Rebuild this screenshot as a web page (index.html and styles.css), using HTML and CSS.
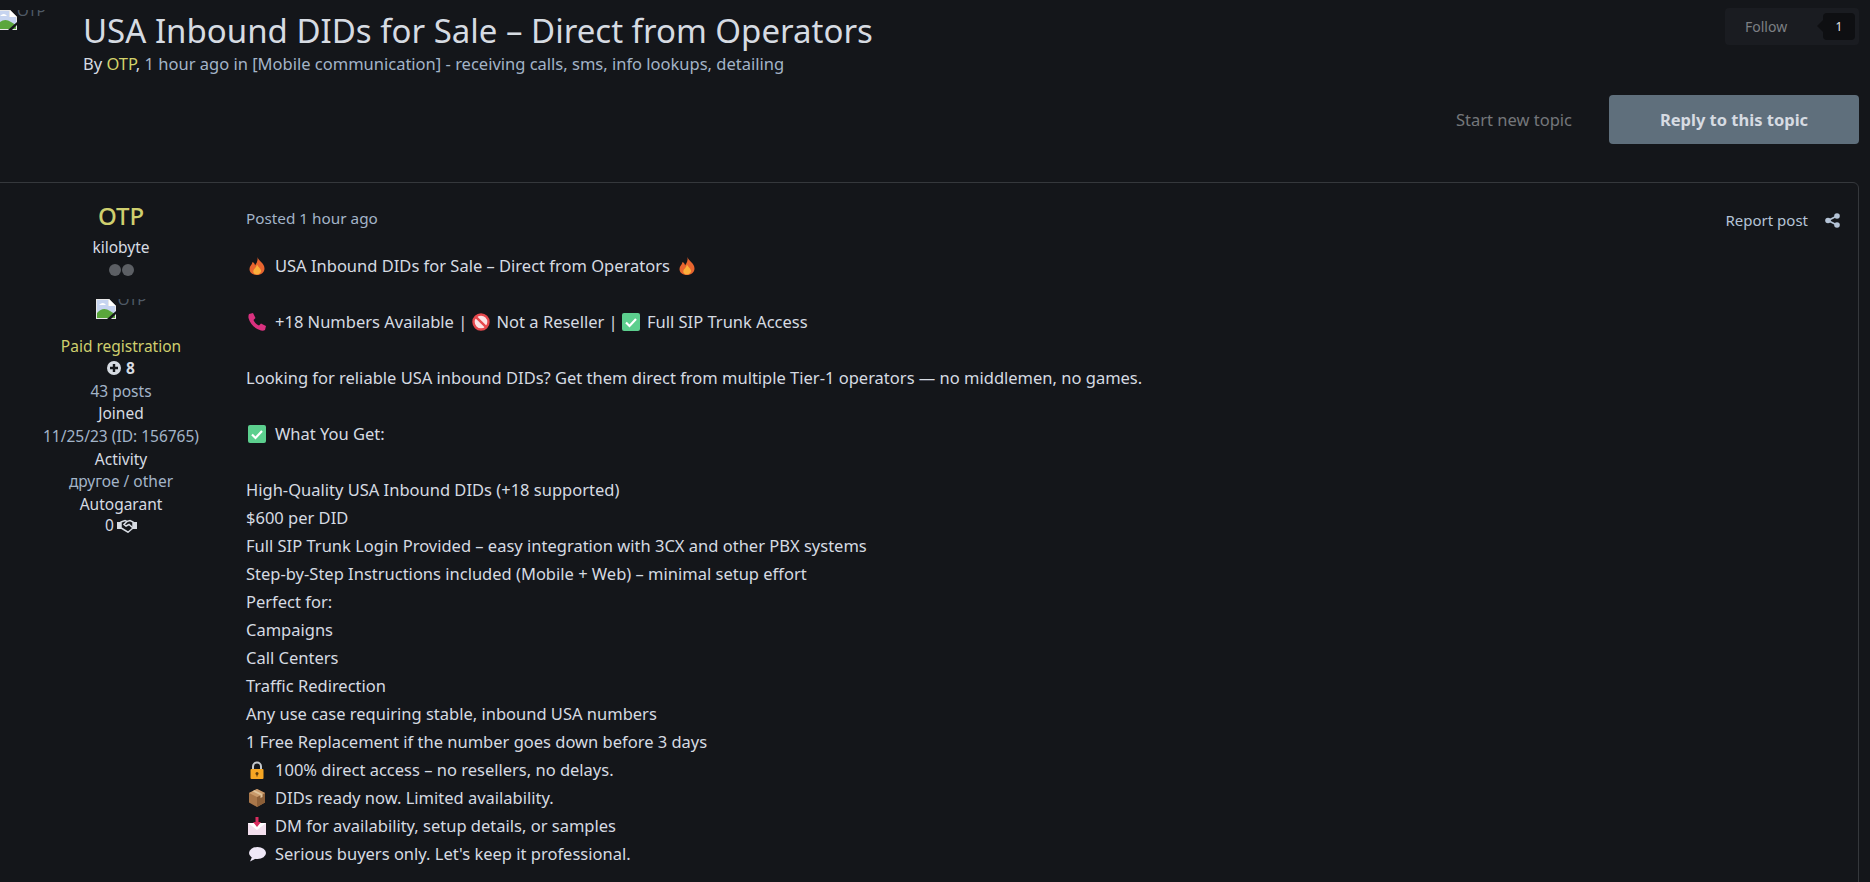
FILE: index.html
```html
<!DOCTYPE html>
<html>
<head>
    <meta charset="UTF-8">
    <title>USA Inbound DIDs for Sale – Direct from Operators</title>
    <link rel="stylesheet" href="styles.css">
</head>
<body>
    <svg class="defs" width="0" height="0">
        <defs>
            <symbol id="broken" viewBox="0 0 20 20">
                <path d="M0 0H13L20 7V20H0Z" fill="#e8e8e8"/>
                <path d="M13 0V7H20Z" fill="#fff"/>
                <path d="M1 1H12V7H19V19H1Z" fill="#c6d4f0"/>
                <path d="M1 19V14Q7 7 14 12L19 15V19Z" fill="#5aa63c"/>
                <path d="M3 6Q7 2 10 6Z" fill="#fff"/>
                <path d="M11 20L20 12V15L15 20Z" fill="#14161a"/>
            </symbol>
            <symbol id="check" viewBox="0 0 18 18">
                <rect x="0" y="0" width="18" height="18" rx="2" fill="#5ccf8e"/>
                <path d="M4 9.500L7.500 13L14 6" fill="none" stroke="#fff" stroke-width="2.200"/>
            </symbol>
            <symbol id="fire" viewBox="0 0 18 18">
                <path d="M9.500 0C10.500 4 16.500 6 16.500 11.500C16.500 15.500 13 18 9 18C4.500 18 1.500 15.500 1.500 12C1.500 9 4 8 4.500 5C6.500 6 7 7.500 7 8.500C9 6 10 3 9.500 0Z" fill="#e8652f"/>
                <path d="M9 7.500C10 10 13.500 12 13 14.500C12.500 16.500 10.500 17.500 9 17.500C6.500 17.500 5 16 5.300 14C5.600 12 8.500 10.500 9 7.500Z" fill="#fbb03b"/>
            </symbol>
        </defs>
    </svg>

    <div class="page">
        <header class="topic-head">
            <div class="topic-head__photo">
                <svg class="broken"><use href="#broken"/></svg>
                <span class="alt-text">OTP</span>
            </div>
            <div class="topic-head__main">
                <h1 class="topic-title">USA Inbound DIDs for Sale – Direct from Operators</h1>
                <p class="topic-by">By <a class="name-link">OTP</a>, <span class="muted">1 hour ago in [Mobile communication] - receiving calls, sms, info lookups, detailing</span></p>
            </div>
            <div class="follow">
                <span class="follow__label">Follow</span>
                <span class="follow__count">1</span>
            </div>
        </header>

        <div class="topic-actions">
            <a class="btn-plain">Start new topic</a>
            <a class="btn-reply">Reply to this topic</a>
        </div>

        <article class="post">
            <aside class="author">
                <div class="author__name">OTP</div>
                <div class="author__rank">kilobyte</div>
                <div class="author__pips"><i></i><i></i></div>
                <div class="author__photo">
                    <svg class="broken"><use href="#broken"/></svg>
                    <span class="alt-text">OTP</span>
                </div>
                <div class="author__group">Paid registration</div>
                <div class="author__rep">
                    <svg width="14" height="14" viewBox="0 0 14 14"><circle cx="7" cy="7" r="7" fill="#d6dbe2"/><path d="M7 3V11M3 7H11" stroke="#14161a" stroke-width="2.400"/></svg>
                    <b>8</b>
                </div>
                <div class="muted">43 posts</div>
                <div>Joined</div>
                <div class="muted">11/25/23 (ID: 156765)</div>
                <div>Activity</div>
                <div class="muted">другое / other</div>
                <div>Autogarant</div>
                <div class="author__garant">0
                    <svg width="20" height="14" viewBox="0 0 20 14" fill="none" stroke="#d6dbe2"><path d="M0 3H4L4 10H0Z" fill="#d6dbe2" stroke="none"/><path d="M16 3H20V10H16Z" fill="#d6dbe2" stroke="none"/><path d="M4 3L8 1.500L10 2.500L13 1.500L16 3V9L11 13.200L5 9.500L4 9Z" stroke-width="1.500"/><path d="M10 2.500L7 5.500L9 7L12 5.500L16 9" stroke-width="1.500"/></svg>
                </div>
            </aside>

            <div class="post__body">
                <div class="post__meta">
                    <span class="muted">Posted 1 hour ago</span>
                    <span class="post__tools">
                        <a class="post__report">Report post</a>
                        <svg width="15" height="15" viewBox="0 0 15 15" fill="#b4c3d6"><circle cx="12" cy="3" r="2.800"/><circle cx="12" cy="12" r="2.800"/><circle cx="3" cy="7.500" r="2.800"/><path d="M3 7.500L12 3M3 7.500L12 12" stroke="#b4c3d6" stroke-width="1.800"/></svg>
                    </span>
                </div>

                <div class="post__text">
                    <p class="emoji-line"><svg class="emoji"><use href="#fire"/></svg>USA Inbound DIDs for Sale – Direct from Operators<svg class="emoji emoji--after"><use href="#fire"/></svg></p>
                    <p class="gap emoji-line">
                        <svg class="emoji" viewBox="0 0 18 18"><path d="M1 1L5 0L7.500 5L5.500 7C6.500 9.500 8.500 11.500 11 12.500L13 10.500L18 13L17 17Q15.500 18 13 17.500C7 16 2 11 .5 5Q.2 2.500 1 1Z" fill="#d9317f"/></svg>+18 Numbers Available |
                        <svg class="emoji emoji--mid" viewBox="0 0 18 18"><circle cx="9" cy="9" r="7.500" fill="#fbe3e6" stroke="#e5484d" stroke-width="2.400"/><path d="M3.800 3.800L14.200 14.200" stroke="#e5484d" stroke-width="2.400"/></svg>Not a Reseller |
                        <svg class="emoji emoji--mid"><use href="#check"/></svg>Full SIP Trunk Access
                    </p>
                    <p class="gap">Looking for reliable USA inbound DIDs? Get them direct from multiple Tier-1 operators — no middlemen, no games.</p>
                    <p class="gap emoji-line"><svg class="emoji"><use href="#check"/></svg>What You Get:</p>
                    <p class="gap">High-Quality USA Inbound DIDs (+18 supported)</p>
                    <p>$600 per DID</p>
                    <p>Full SIP Trunk Login Provided – easy integration with 3CX and other PBX systems</p>
                    <p>Step-by-Step Instructions included (Mobile + Web) – minimal setup effort</p>
                    <p>Perfect for:</p>
                    <p>Campaigns</p>
                    <p>Call Centers</p>
                    <p>Traffic Redirection</p>
                    <p>Any use case requiring stable, inbound USA numbers</p>
                    <p>1 Free Replacement if the number goes down before 3 days</p>
                    <p class="emoji-line">
                        <svg class="emoji" viewBox="0 0 18 18"><path d="M5 9V5.500A4 4 0 0 1 13 5.500V9" fill="none" stroke="#c4c8cc" stroke-width="2"/><rect x="2.500" y="8" width="13" height="10" rx="1" fill="#f6a623"/><circle cx="9" cy="12.500" r="1.500" fill="#5c3a0a"/><path d="M8.500 13H9.500V15.500H8.500Z" fill="#5c3a0a"/></svg>100% direct access – no resellers, no delays.
                    </p>
                    <p class="emoji-line">
                        <svg class="emoji" viewBox="0 0 18 18"><path d="M9 0L17 4V13.500L9 18L1 13.500V4Z" fill="#a9774a"/><path d="M9 8L17 4V13.500L9 18Z" fill="#8c5f38"/><path d="M1 4L9 0L17 4L9 8Z" fill="#c99a6b"/><path d="M4.500 2.200L12.500 6.200V9L14.500 8V5L6.500 1.200Z" fill="#e0c39a"/></svg>DIDs ready now. Limited availability.
                    </p>
                    <p class="emoji-line">
                        <svg class="emoji" viewBox="0 0 18 18"><path d="M0 6H18V18H0Z" fill="#f3dfee"/><path d="M0 6L9 13L18 6Z" fill="#fff"/><path d="M7.500 0H10.500V5H13L9 10L5 5H7.500Z" fill="#d92c5f"/></svg>DM for availability, setup details, or samples
                    </p>
                    <p class="emoji-line">
                        <svg class="emoji" viewBox="0 0 18 18"><ellipse cx="9.500" cy="8" rx="8.500" ry="6" fill="#efe8f7"/><path d="M4 12L2 16.500L8 13.500Z" fill="#efe8f7"/></svg>Serious buyers only. Let's keep it professional.
                    </p>
                </div>
            </div>
        </article>
    </div>
</body>
</html>
```

FILE: styles.css
```css
*, *::before, *::after {
    box-sizing: border-box;
}
html, body {
    height: 882px;
    overflow: hidden;
}
body {
    margin: 0;
    background-color: #14161a;
    color: #d6dbe2;
    font-family: "Noto Sans", sans-serif;
    font-size: 16.500px;
}
p {
    margin: 0;
}
.defs {
    display: block;
    height: 0;
}
.muted {
    color: #a3b4c8;
}
.page {
    padding-right: 11px;
}
.topic-head {
    display: flex;
    height: 95px;
}
.topic-head__photo {
    display: flex;
    width: 83px;
    height: 20px;
    margin-top: 10px;
    overflow: hidden;
    flex-shrink: 0;
}
.topic-head__photo .broken {
    margin-left: -3px;
}
.topic-head__photo .alt-text {
    margin-top: -7px;
}
.broken {
    width: 20px;
    height: 20px;
    flex-shrink: 0;
}
.alt-text {
    color: #4f5a66;
    font-size: 15px;
    line-height: 14px;
}
.topic-head__main {
    flex: 1;
    padding-top: 10px;
}
.topic-title {
    margin: 0;
    font-size: 33px;
    font-weight: 400;
    line-height: 42px;
    color: #d6dbe2;
}
.topic-by {
    font-size: 16.500px;
    line-height: 24px;
}
.name-link {
    color: #d2d26a;
}
.follow {
    display: flex;
    align-items: center;
    justify-content: space-between;
    width: 134px;
    height: 37px;
    margin-top: 8px;
    padding: 0 4px 0 20px;
    border-radius: 4px;
    background-color: #1a1c21;
}
.follow__label {
    font-size: 14px;
    color: #7d8084;
}
.follow__count {
    position: relative;
    width: 32px;
    height: 27px;
    line-height: 27px;
    text-align: center;
    font-size: 12px;
    color: #e6e8ea;
    border-radius: 4px;
    background-color: #0e0f12;
}
.follow__count::before {
    content: "";
    position: absolute;
    left: -6px;
    top: 7px;
    border-top: 6px solid transparent;
    border-bottom: 6px solid transparent;
    border-right: 6px solid #0e0f12;
}
.topic-actions {
    display: flex;
    justify-content: flex-end;
    align-items: center;
    gap: 37px;
    height: 49px;
}
.btn-plain {
    color: #74777b;
    font-size: 16.500px;
}
.btn-reply {
    width: 250px;
    height: 49px;
    line-height: 49px;
    text-align: center;
    font-weight: 700;
    font-size: 16.500px;
    color: #d6dbe2;
    border-radius: 4px;
    background-color: #5f6f7c;
}
.post {
    display: flex;
    margin-top: 38px;
    margin-left: -10px;
    height: 720px;
    border: 1px solid #35383c;
    border-radius: 6px;
}
.author {
    width: 255px;
    padding: 17px 0 0 5px;
    flex-shrink: 0;
    text-align: center;
    font-size: 15.500px;
    line-height: 22.600px;
}
.author__name {
    font-size: 24px;
    font-weight: 500;
    line-height: 32px;
    color: #cfcf6e;
}
.author__rank {
    margin-top: 4px;
}
.author__pips {
    display: flex;
    justify-content: center;
    gap: 1px;
    height: 22px;
    padding-top: 5px;
}
.author__pips i {
    width: 12px;
    height: 12px;
    border-radius: 50%;
    background-color: #5c5f64;
}
.author__photo {
    display: flex;
    justify-content: center;
    height: 20px;
    margin-top: 18px;
    overflow: hidden;
}
.author__photo .alt-text {
    margin-top: -7px;
    padding-left: 2px;
}
.author__group {
    margin-top: 16px;
    color: #cfcf6e;
}
.author__rep {
    display: flex;
    justify-content: center;
    align-items: center;
    gap: 5px;
}
.author__garant {
    display: flex;
    justify-content: center;
    align-items: center;
    gap: 3px;
    margin-top: -1px;
}
.post__body {
    flex: 1;
    padding: 23px 18px 0 0;
}
.post__meta {
    display: flex;
    justify-content: space-between;
    align-items: center;
    font-size: 15.300px;
    height: 24px;
}
.post__tools {
    display: flex;
    align-items: center;
    gap: 17px;
    padding-top: 4px;
}
.post__report {
    color: #b4c3d6;
    font-size: 15px;
}
.post__text {
    margin-top: 22px;
    font-size: 16.500px;
    line-height: 28px;
}
.gap {
    margin-top: 28px;
}
.emoji-line {
    white-space: nowrap;
}
.emoji {
    display: inline-block;
    width: 18px;
    height: 18px;
    margin: 0 9px 0 2px;
    vertical-align: -3px;
}
.emoji--after {
    margin: 0 0 0 8px;
}
.emoji--mid {
    margin: 0 7px 0 0;
}
```
